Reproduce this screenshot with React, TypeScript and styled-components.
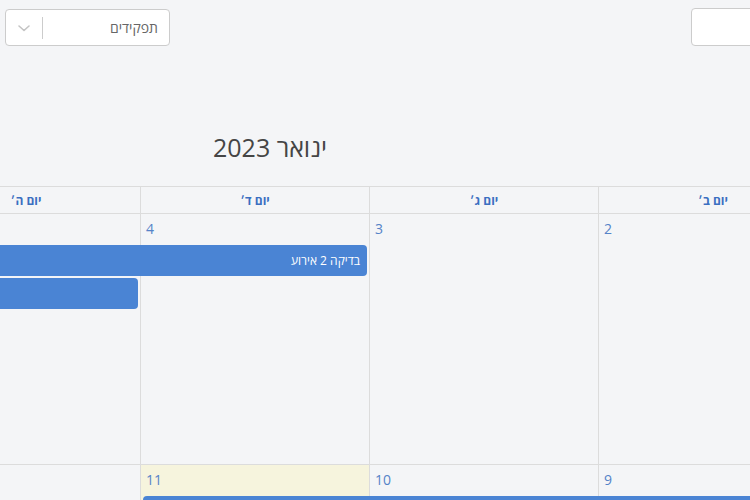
import React from "react";
import styled, { createGlobalStyle } from "styled-components";

const GlobalStyle = createGlobalStyle`
  html, body { margin: 0; padding: 0; background: #f4f5f7; }
  body { font-family: "Open Sans", "Liberation Sans", "DejaVu Sans", sans-serif; }
  * { box-sizing: border-box; }
`;

const Page = styled.div`
  width: 750px;
  height: 500px;
  overflow: hidden;
  background: #f4f5f7;
`;

const TopBar = styled.div`
  display: flex;
  justify-content: space-between;
  align-items: flex-start;
  height: 46px;
  padding-left: 5px;
`;

const Select = styled.div`
  margin-top: 9px;
  width: 165px;
  height: 37px;
  background: #fff;
  border: 1px solid #cccccc;
  border-radius: 4px;
  display: flex;
  align-items: center;
  direction: rtl;
`;

const SelectLabel = styled.span`
  flex: 1;
  padding-right: 11px;
  font-size: 14px;
  color: #666;
`;

const Separator = styled.span`
  width: 1px;
  height: 22px;
  background: #cccccc;
`;

const Chevron = styled.span`
  width: 36px;
  display: flex;
  justify-content: center;
  align-items: center;
  color: #c4c4c4;
`;

const SearchBox = styled.div`
  margin-top: 8px;
  width: 80px;
  height: 38px;
  margin-right: -21px;
  background: #fff;
  border: 1px solid #cccccc;
  border-radius: 4px;
`;

const TitleRow = styled.div`
  display: flex;
  justify-content: center;
  width: 540px;
  padding-top: 86px;
`;

const Title = styled.h2`
  margin: 0;
  font-size: 25px;
  line-height: 30px;
  font-weight: 400;
  color: #454545;
  direction: rtl;
`;

const CalendarViewport = styled.div`
  margin-top: 24px;
  overflow: hidden;
  width: 750px;
`;

const Grid = styled.div`
  margin-left: -89px;
  width: 916px;
  direction: rtl;
`;

const HeaderRow = styled.div`
  display: grid;
  grid-template-columns: repeat(4, 229px);
  border-top: 1px solid #dcdcdc;
  border-bottom: 1px solid #dcdcdc;
`;

const HeaderCell = styled.div`
  height: 26px;
  border-left: 1px solid #dcdcdc;
  display: flex;
  align-items: center;
  justify-content: center;
  font-size: 12px;
  font-weight: 700;
  color: #3b6fc1;
`;

const Week = styled.div<{ $height: number }>`
  position: relative;
  display: grid;
  grid-template-columns: repeat(4, 229px);
  height: ${(p) => p.$height}px;
  border-bottom: 1px solid #dcdcdc;
`;

const DayCell = styled.div<{ $today?: boolean }>`
  border-left: 1px solid #dcdcdc;
  background: ${(p) => (p.$today ? "#f6f4dd" : "transparent")};
  text-align: left;
  padding: 3px 5px 0 5px;
`;

const DayNumber = styled.span`
  font-size: 14px;
  line-height: 20px;
  color: #5583c8;
`;

const EventBar = styled.div<{ $left: number; $right: number; $top: number; $roundLeft?: boolean; $roundRight?: boolean }>`
  position: absolute;
  top: ${(p) => p.$top}px;
  left: ${(p) => p.$left}px;
  right: ${(p) => p.$right}px;
  height: 31px;
  background: #4a84d4;
  border-top-right-radius: ${(p) => (p.$roundRight ? "4px" : "0")};
  border-bottom-right-radius: ${(p) => (p.$roundRight ? "4px" : "0")};
  border-top-left-radius: ${(p) => (p.$roundLeft ? "4px" : "0")};
  border-bottom-left-radius: ${(p) => (p.$roundLeft ? "4px" : "0")};
  color: #fff;
  font-size: 12px;
  display: flex;
  align-items: center;
  padding-right: 7px;
  white-space: nowrap;
  overflow: hidden;
`;

const days = ["יום ב׳", "יום ג׳", "יום ד׳", "יום ה׳"];

export default function App() {
  return (
    <Page>
      <GlobalStyle />
      <TopBar>
        <Select>
          <SelectLabel>תפקידים</SelectLabel>
          <Separator />
          <Chevron>
            <svg width="14" height="10" viewBox="0 0 14 10" fill="none" stroke="currentColor" strokeWidth="1.6" strokeLinecap="round" strokeLinejoin="round">
              <path d="M2 3 L7 7.5 L12 3" />
            </svg>
          </Chevron>
        </Select>
        <SearchBox />
      </TopBar>
      <TitleRow>
        <Title>ינואר 2023</Title>
      </TitleRow>
      <CalendarViewport>
        <Grid>
          <HeaderRow>
            {days.map((d) => (
              <HeaderCell key={d}>{d}</HeaderCell>
            ))}
          </HeaderRow>
          <Week $height={251}>
            {[2, 3, 4, 5].map((n) => (
              <DayCell key={n}>
                <DayNumber>{n}</DayNumber>
              </DayCell>
            ))}
            <EventBar $top={31} $left={0} $right={460} $roundRight>
              בדיקה 2 אירוע
            </EventBar>
            <EventBar $top={64} $left={0} $right={689} $roundRight />
          </Week>
          <Week $height={120}>
            {[9, 10, 11, 12].map((n) => (
              <DayCell key={n} $today={n === 11}>
                <DayNumber>{n}</DayNumber>
              </DayCell>
            ))}
            <EventBar $top={31} $left={232} $right={0} $roundLeft />
          </Week>
        </Grid>
      </CalendarViewport>
    </Page>
  );
}
